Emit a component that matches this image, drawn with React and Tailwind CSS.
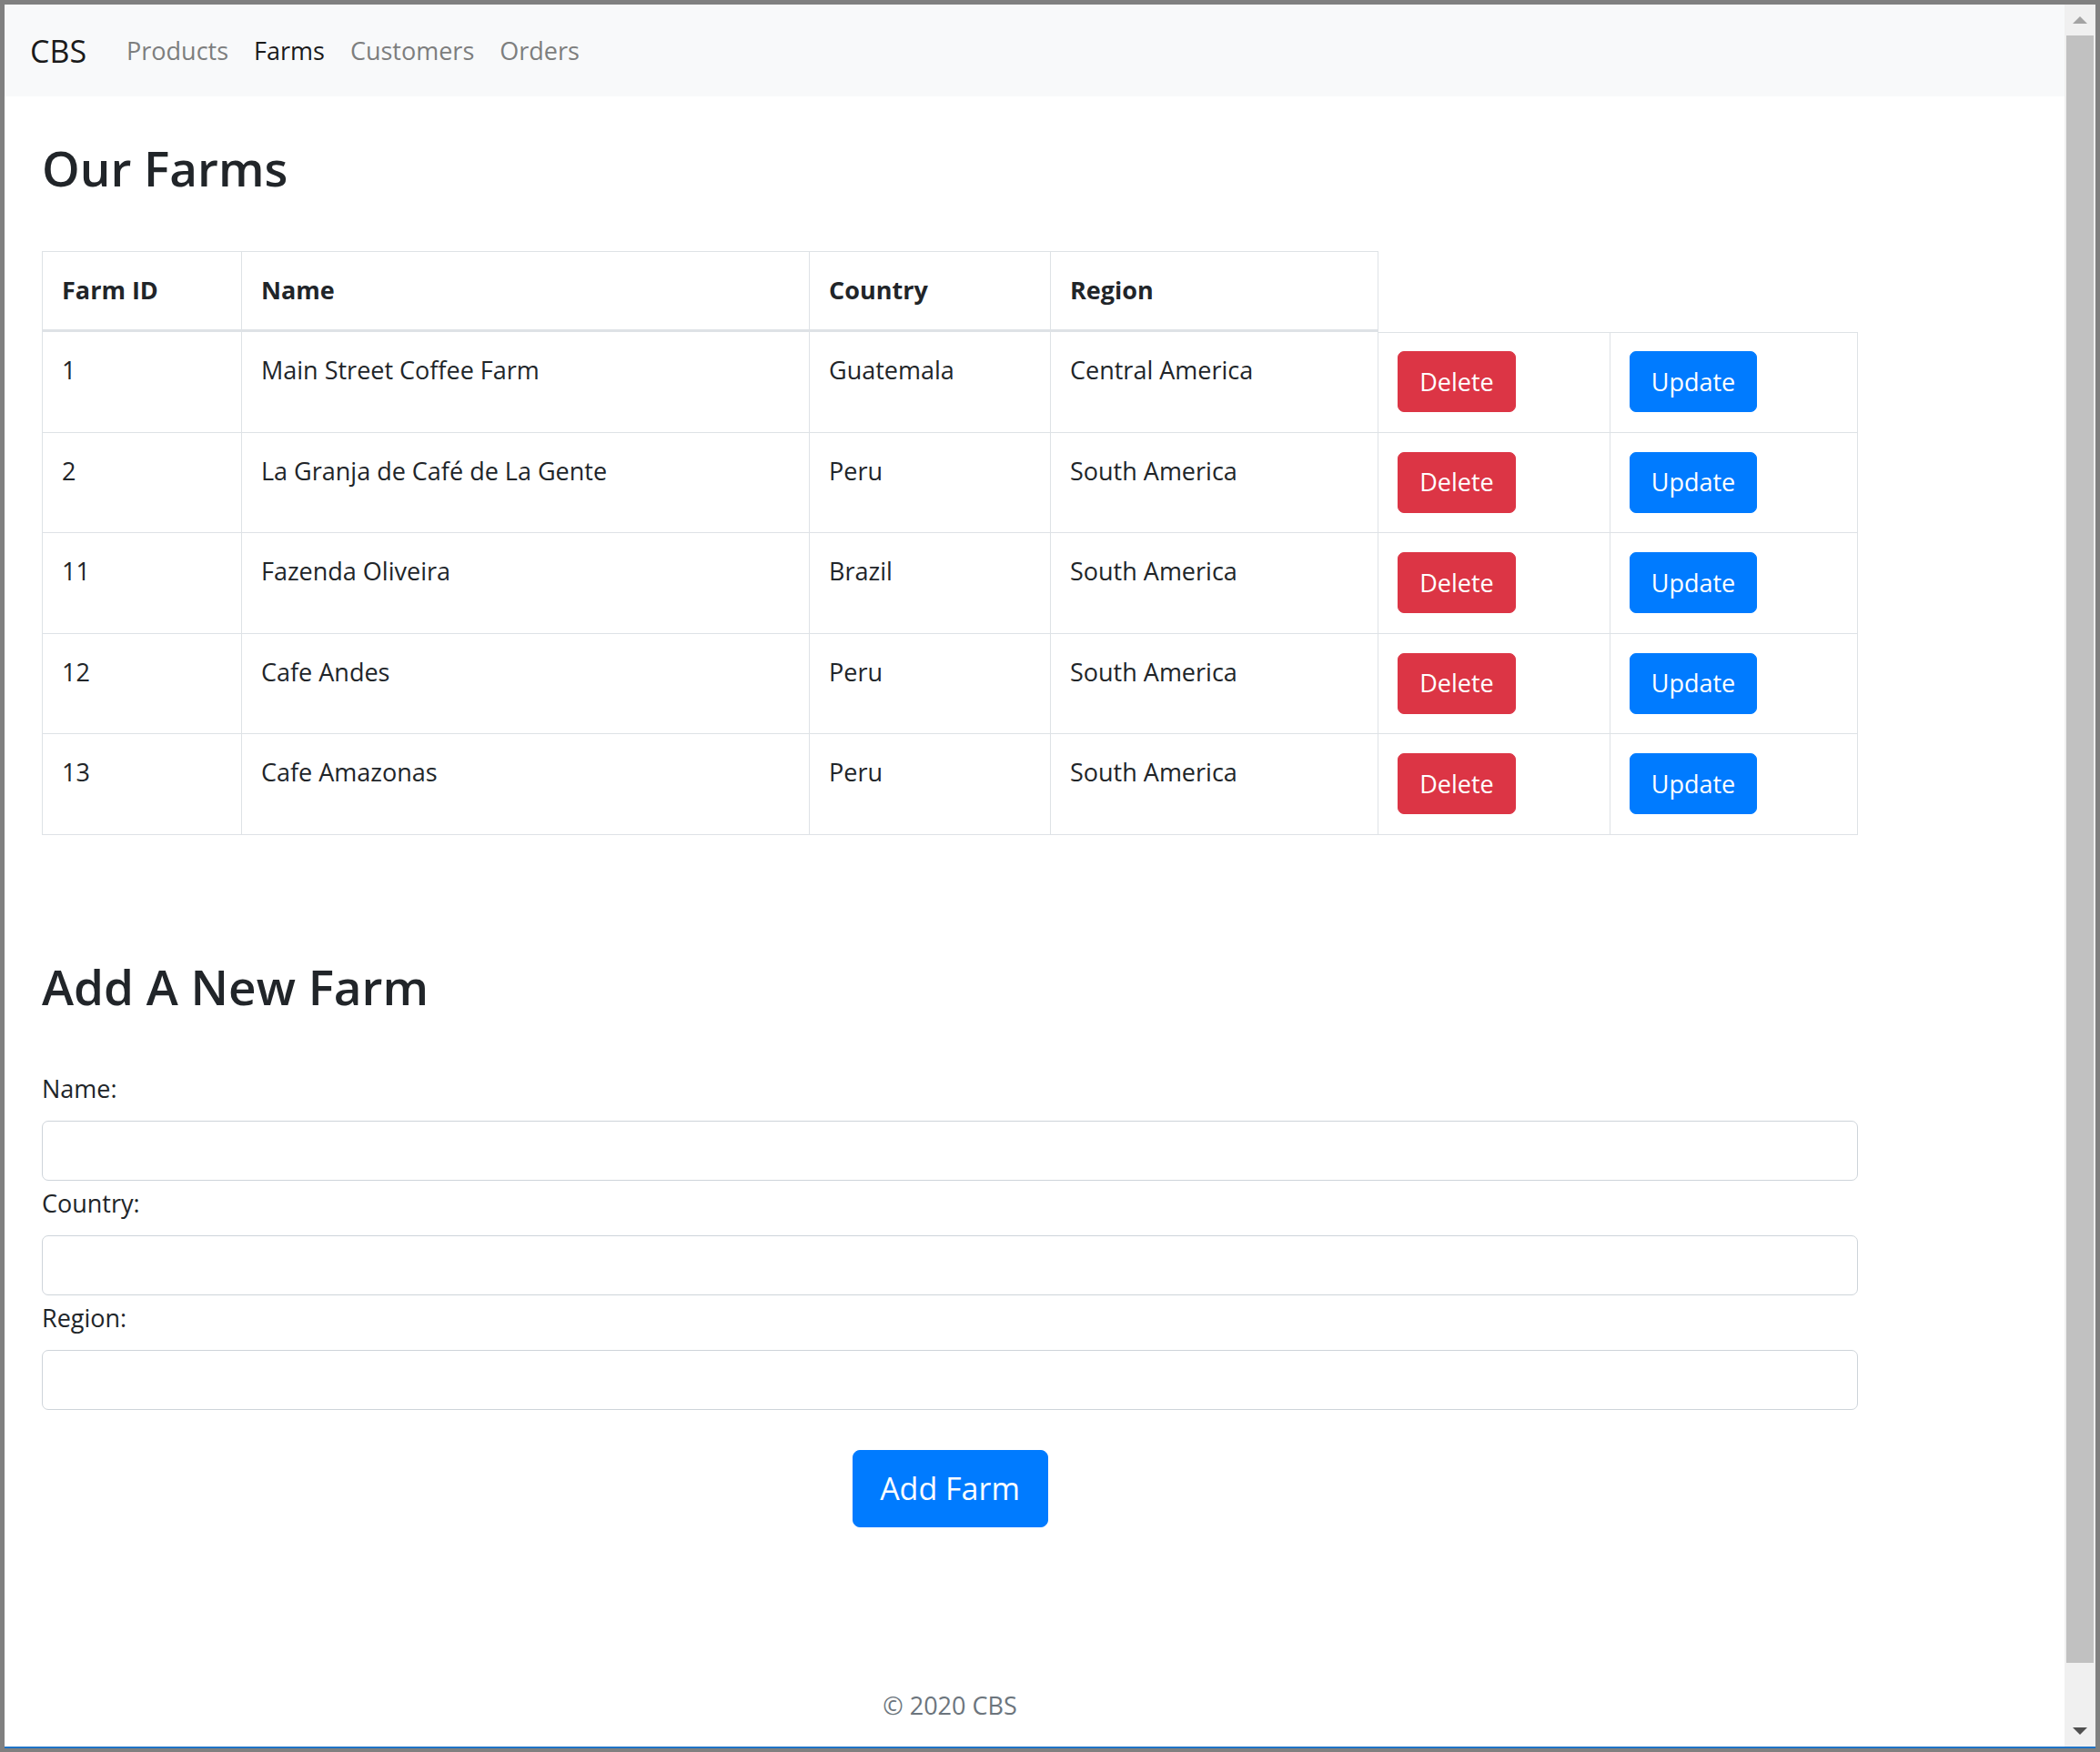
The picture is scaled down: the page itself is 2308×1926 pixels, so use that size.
import React from "react";

const farms = [
  { id: 1, name: "Main Street Coffee Farm", country: "Guatemala", region: "Central America" },
  { id: 2, name: "La Granja de Café de La Gente", country: "Peru", region: "South America" },
  { id: 11, name: "Fazenda Oliveira", country: "Brazil", region: "South America" },
  { id: 12, name: "Cafe Andes", country: "Peru", region: "South America" },
  { id: 13, name: "Cafe Amazonas", country: "Peru", region: "South America" },
];

const cols = "grid grid-cols-[220px_624px_265px_360px_255px_272px]";
const th =
  "border-t border-r border-b-[3px] border-[#dee2e6] px-[21px] pt-[21px] pb-[22px] text-[27px] leading-[42px] font-bold text-left";
const td = "border-r border-b border-[#dee2e6] px-[21px] pb-[21.5px] text-[27px] leading-[42px]";

const Navbar = () => (
  <nav className="h-[101px] flex items-center bg-[#f8f9fa] pl-[28px]">
    <span className="text-[34px] leading-[52px] text-[#1a1a1a] mr-[30px]">CBS</span>
    <a className="px-[14px] text-[27px] leading-[42px] text-[#7d7e7e]">Products</a>
    <a className="px-[14px] text-[27px] leading-[42px] text-[#1a1a1a]">Farms</a>
    <a className="px-[14px] text-[27px] leading-[42px] text-[#7d7e7e]">Customers</a>
    <a className="px-[14px] text-[27px] leading-[42px] text-[#7d7e7e]">Orders</a>
  </nav>
);

const FarmTable = () => (
  <div className="text-[#212529]">
    <div className={cols}>
      <div className={th + " border-l"}>Farm ID</div>
      <div className={th}>Name</div>
      <div className={th}>Country</div>
      <div className={th}>Region</div>
      <div></div>
      <div></div>
    </div>
    {farms.map((f, i) => {
      const first = i === 0;
      const pt = "pt-[21px]";
      const btnPt = first ? " border-t pt-[20px]" : " pt-[21px]";
      return (
        <div key={f.id} className={cols}>
          <div className={td + " border-l " + pt}>{f.id}</div>
          <div className={td + " " + pt}>{f.name}</div>
          <div className={td + " " + pt}>{f.country}</div>
          <div className={td + " " + pt}>{f.region}</div>
          <div className={td + btnPt}>
            <button className="w-[130px] h-[67px] rounded-[7px] bg-[#dc3545] border border-[#dc3545] text-white text-[27px] leading-[42px]">
              Delete
            </button>
          </div>
          <div className={td + btnPt}>
            <button className="w-[140px] h-[67px] rounded-[7px] bg-[#007bff] border border-[#007bff] text-white text-[27px] leading-[42px]">
              Update
            </button>
          </div>
        </div>
      );
    })}
  </div>
);

const Field = ({ label, first }) => (
  <div className={first ? "mt-[58px]" : "mt-[4px]"}>
    <label className="block text-[27px] leading-[42px] text-[#212529] mb-[14px]">{label}</label>
    <input
      type="text"
      className="block w-full h-[66px] border border-[#ced4da] rounded-[7px] bg-white px-[21px] text-[27px] outline-none"
    />
  </div>
);

const Scrollbar = () => (
  <div className="w-[34px] bg-[#f0f0f0] flex flex-col">
    <div className="h-[34px] flex items-center justify-center">
      <svg width="16" height="8" viewBox="0 0 16 8">
        <polygon points="8,0 16,8 0,8" fill="#a3a3a3" />
      </svg>
    </div>
    <div className="mx-[2px] h-[1789px] bg-[#c1c1c1]"></div>
    <div className="flex-1"></div>
    <div className="h-[34px] flex items-center justify-center">
      <svg width="16" height="8" viewBox="0 0 16 8">
        <polygon points="0,0 16,0 8,8" fill="#505050" />
      </svg>
    </div>
  </div>
);

export default function App() {
  return (
    <div className="w-[2308px] h-[1926px] bg-[#808080] pt-[5px] px-[5px] pb-[4px] flex flex-col overflow-hidden font-['Open_Sans','Noto_Sans',sans-serif]">
      <div className="flex-1 flex min-h-0">
        <div className="flex-1 bg-white flex flex-col">
          <Navbar />
          <main className="ml-[41px] w-[1996px]">
            <h2 className="mt-[45px] mb-[58px] text-[53px] leading-[67px] font-semibold text-[#212529]">
              Our Farms
            </h2>
            <FarmTable />
            <h2 className="mt-[133px] text-[53px] leading-[67px] font-semibold text-[#212529]">
              Add A New Farm
            </h2>
            <form>
              <Field label="Name:" first />
              <Field label="Country:" />
              <Field label="Region:" />
              <div className="mt-[44px] flex justify-center">
                <button
                  type="button"
                  className="w-[215px] h-[85px] rounded-[8px] bg-[#007bff] border border-[#007bff] text-white text-[34px] leading-[52px]"
                >
                  Add Farm
                </button>
              </div>
            </form>
            <footer className="mt-[175px] text-center text-[27px] leading-[42px] text-[#6c757d]">
              © 2020 CBS
            </footer>
          </main>
        </div>
        <Scrollbar />
      </div>
      <div className="h-[2px] bg-[#1f73c6]"></div>
    </div>
  );
}
